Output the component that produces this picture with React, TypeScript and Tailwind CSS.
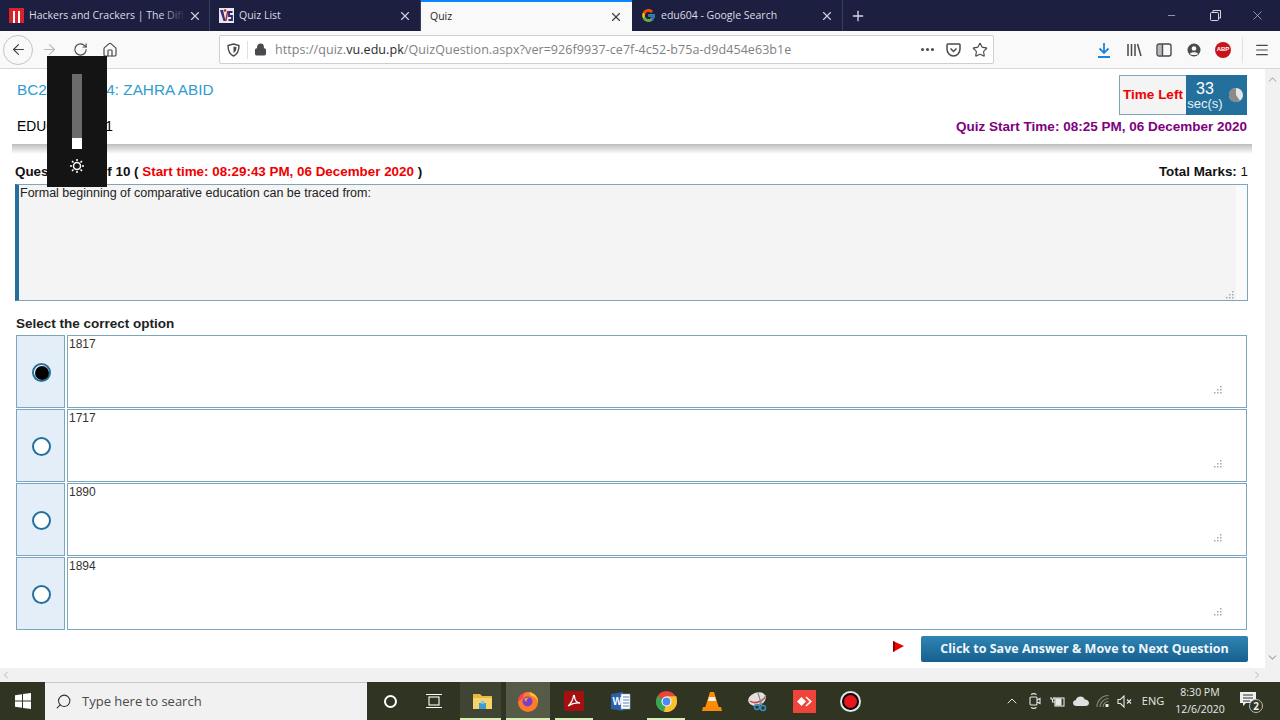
import React from 'react';
import { ArrowLeft, ArrowRight, RotateCw, Home, Lock, MoreHorizontal, Star, ChevronUp, ChevronDown, ChevronLeft, ChevronRight, X, Plus, Minus, Search, Menu } from 'lucide-react';
import { FcGoogle } from 'react-icons/fc';

// Tab favicons
const HackersIcon = () => (
  <svg width="15" height="15" viewBox="0 0 15 15">
    <rect width="15" height="15" fill="#d8232a" />
    <rect x="4" y="3" width="2" height="12" fill="#fff" />
    <rect x="9" y="3" width="2" height="12" fill="#fff" />
  </svg>
);

const VuIcon = () => (
  <svg width="15" height="15" viewBox="0 0 15 15">
    <rect width="15" height="15" fill="#e8e6ee" />
    <path d="M1 2 L4.5 13 L6.5 13 L4 2 Z" fill="#3a2a7a" />
    <path d="M6 13 L8 3 L9.5 3 L7.5 13 Z" fill="#b3202a" />
    <path d="M13.5 4 L10 4 L10 8 L13 8 L13 12 L9.5 12" fill="none" stroke="#2a2a6a" strokeWidth="1.8" />
    <circle cx="6" cy="2.5" r="1.3" fill="#b3202a" />
  </svg>
);

const Tab = ({ title, icon, active, fade, width }: { title: string; icon?: React.ReactNode; active?: boolean; fade?: boolean; width: string }) => (
  <div
    className={
      active
        ? `${width} h-[31px] flex items-center bg-[#f9f9fa] border-t-2 border-[#0a84ff] pl-[9px] text-[#26262b]`
        : `${width} h-[31px] flex items-center border-r border-[#3a3d5c] pl-[9px] text-[#dcdce4]`
    }
  >
    {icon && <span className="w-[20px] shrink-0 flex items-center">{icon}</span>}
    <span className="relative w-[156px] pt-px overflow-hidden whitespace-nowrap text-[10.500px] font-['Open_Sans',sans-serif]">
      {title}
      {fade && <span className="absolute right-0 top-0 h-full w-[24px] bg-gradient-to-r from-transparent to-[#1c1f40]" />}
    </span>
    <span className={icon ? 'ml-[3px]' : 'ml-[23px]'}>
      <X size={14} strokeWidth={2} className={active ? 'text-[#3c3c44]' : 'text-[#d0d0da]'} />
    </span>
  </div>
);

const TabBar = () => (
  <div className="h-[31px] flex items-start bg-[#1c1f40] shrink-0">
    <Tab width="w-[210px]" title="Hackers and Crackers | The Diff" icon={<HackersIcon />} fade />
    <Tab width="w-[211px]" title="Quiz List" icon={<VuIcon />} />
    <Tab width="w-[211px]" title="Quiz" active />
    <Tab width="w-[211px]" title="edu604 - Google Search" icon={<FcGoogle size={15} />} />
    <div className="w-[30px] h-[31px] flex items-center justify-center">
      <Plus size={16} strokeWidth={2} className="text-[#d8d8e2]" />
    </div>
    <div className="flex-1" />
    <div className="w-[46px] h-[31px] flex items-center justify-center">
      <Minus size={11} strokeWidth={1.5} className="text-[#c8c8d4]" />
    </div>
    <div className="w-[41px] h-[31px] flex items-center justify-center pl-[2px]">
      <svg width="11" height="11" viewBox="0 0 11 11" fill="none" stroke="#d8d8e2">
        <rect x="0.5" y="2.5" width="8" height="8" rx="1" />
        <path d="M3 2.5 V0.5 H10.5 V8 H8.5" />
      </svg>
    </div>
    <div className="w-[45px] h-[31px] flex items-center justify-center">
      <X size={15} strokeWidth={1} className="text-[#d8d8e2]" />
    </div>
  </div>
);

const Shield = () => (
  <svg width="13" height="14" viewBox="0 0 13 14" fill="none" stroke="#4a4a4f" strokeWidth="1.4">
    <path d="M6.5 1 L12 2.5 C12 8 10 11.500 6.500 13 C3 11.500 1 8 1 2.500 Z" />
    <path d="M6.500 3.500 L9.500 4.300 C9.500 7 8.500 9 6.500 10 Z" fill="#4a4a4f" stroke="none" />
  </svg>
);

const Pocket = () => (
  <svg width="15" height="14" viewBox="0 0 15 14" fill="none" stroke="#4a4a4f" strokeWidth="1.5">
    <path d="M1 2 C1 1.300 1.500 1 2 1 H13 C13.500 1 14 1.300 14 2 V6 C14 10 11 13 7.500 13 C4 13 1 10 1 6 Z" />
    <path d="M4.500 5.500 L7.500 8.500 L10.500 5.500" />
  </svg>
);

const Library = () => (
  <svg width="15" height="14" viewBox="0 0 15 14" fill="none" stroke="#4a4a4f" strokeWidth="1.5">
    <path d="M1 1 V13 M4.500 1 V13 M8 1 V13 M10.500 1 L14 13" />
  </svg>
);

const Sidebar = () => (
  <svg width="16" height="14" viewBox="0 0 16 14" fill="none" stroke="#4a4a4f" strokeWidth="1.4">
    <rect x="1" y="1" width="14" height="12" rx="2" />
    <rect x="2" y="2" width="4" height="10" fill="#b8b8bc" stroke="none" />
    <path d="M6.500 1 V13" />
  </svg>
);

const Account = () => (
  <svg width="14" height="14" viewBox="0 0 14 14">
    <circle cx="7" cy="7" r="6.500" fill="#4a4a4f" />
    <circle cx="7" cy="5.500" r="2.300" fill="#f9f9fa" />
    <path d="M2.800 11 C3.500 8.800 10.500 8.800 11.200 11 C10 12.300 4 12.300 2.800 11 Z" fill="#f9f9fa" />
  </svg>
);

const NavBar = () => (
  <div className="h-[38px] flex items-center bg-[#f9f9fa] border-b border-[#d8d8da] shrink-0">
    <div className="ml-[3px] w-[30px] h-[30px] rounded-full border border-[#c4c4c6] flex items-center justify-center">
      <ArrowLeft size={17} strokeWidth={1.6} className="text-[#3f3f44]" />
    </div>
    <div className="w-[32px] flex justify-center">
      <ArrowRight size={17} strokeWidth={1.5} className="text-[#b8b8bb]" />
    </div>
    <div className="w-[30px] flex justify-center">
      <RotateCw size={15} strokeWidth={1.8} className="text-[#4a4a4f]" />
    </div>
    <div className="w-[30px] flex justify-center">
      <Home size={16} strokeWidth={1.8} className="text-[#4a4a4f]" />
    </div>
    <div className="ml-[94px] w-[775px] h-[29px] flex items-center bg-white border border-[#cfcfd2] rounded-[2px]">
      <div className="w-[21px] flex justify-end pr-[1px]"><Shield /></div>
      <div className="w-px h-[18px] bg-[#e0e0e2] ml-[6px]" />
      <Lock size={13} strokeWidth={2.4} fill="#4a4a4f" className="text-[#4a4a4f] ml-[6px]" />
      <span className="ml-[8px] pt-[2px] whitespace-nowrap text-[12.500px] text-[#808084] font-['Open_Sans',sans-serif] tracking-[0.07px]">
        https://quiz.<span className="text-[#2a2a2e]">vu.edu.pk</span>/QuizQuestion.aspx?ver=926f9937-ce7f-4c52-b75a-d9d454e63b1e
      </span>
      <div className="flex-1" />
      <MoreHorizontal size={17} strokeWidth={2.4} className="text-[#4a4a4f]" />
      <div className="ml-[10px]"><Pocket /></div>
      <Star size={16} strokeWidth={1.7} className="text-[#4a4a4f] ml-[11px] mr-[5px]" />
    </div>
    <div className="ml-[99px] w-[22px] flex justify-center">
      <svg width="14" height="16" viewBox="0 0 14 16" fill="none" stroke="#1f84d8" strokeWidth="1.800">
        <path d="M7 1 V11 M2.500 6.500 L7 11 L11.500 6.500" />
        <path d="M1 15 H13" strokeWidth="2" />
      </svg>
    </div>
    <div className="ml-[8px] w-[22px] flex justify-center"><Library /></div>
    <div className="ml-[8px] w-[22px] flex justify-center"><Sidebar /></div>
    <div className="ml-[8px] w-[22px] flex justify-center"><Account /></div>
    <div className="ml-[7px] w-[22px] flex justify-center">
      <div className="w-[16px] h-[16px] rounded-full bg-[#c8141c] flex items-center justify-center text-white text-[6px] font-bold font-['Liberation_Sans',sans-serif]">ABP</div>
    </div>
    <div className="ml-[8px] w-px h-[26px] bg-[#e2e2e4]" />
    <div className="ml-[11px]">
      <Menu size={16} strokeWidth={1.8} className="text-[#4a4a4f]" />
    </div>
  </div>
);

const ResizeGrip = () => (
  <svg width="9" height="9" viewBox="0 0 9 9" fill="#a8a8a8">
    <rect x="7" y="1" width="1.500" height="1.500" />
    <rect x="4" y="4" width="1.500" height="1.500" />
    <rect x="7" y="4" width="1.500" height="1.500" />
    <rect x="1" y="7" width="1.500" height="1.500" />
    <rect x="4" y="7" width="1.500" height="1.500" />
    <rect x="7" y="7" width="1.500" height="1.500" />
  </svg>
);

const Option = ({ text, checked }: { text: string; checked?: boolean }) => (
  <div className="flex h-[73px] gap-[2px]">
    <div className="w-[49px] bg-[#e4eef9] border border-[#7ba6bd] flex items-center justify-center pl-[2px] pt-[2px]">
      <div className="w-[19px] h-[19px] rounded-full border-[2.500px] border-[#24709c] bg-white flex items-center justify-center">
        {checked && <div className="w-[14px] h-[14px] rounded-full bg-black" />}
      </div>
    </div>
    <div className="flex-1 flex bg-white border border-[#7ba6bd] pl-[1px] pr-[24px] pb-[13px] text-[12px] leading-[14px] text-[#333]">
      <span className="flex-1 pt-[1px]">{text}</span>
      <span className="self-end"><ResizeGrip /></span>
    </div>
  </div>
);

const QuizPage = () => (
  <div className="flex-1 bg-white pl-[16px] pr-[18px] flex flex-col font-['Liberation_Sans',sans-serif]">
    <div className="h-[46px] pt-[6px] flex justify-between">
      <div className="text-[15.300px] leading-[17px] pt-[6px] pl-px text-[#2e9ccf]">BC200204204: ZAHRA ABID</div>
      <div className="flex h-[40px] w-[128px]">
        <div className="w-[67px] bg-[#f4f4f4] border border-[#7ba6bd] border-r-0 flex items-center justify-center text-[13.500px] font-bold text-[#f00000] whitespace-nowrap">
          Time Left
        </div>
        <div className="flex-1 bg-[#24709c] flex items-center text-white">
          <div className="w-[38px] flex flex-col items-center">
            <span className="text-[16px] leading-[17px]">33</span>
            <span className="text-[13px] leading-[13px] text-[#e8eff4]">sec(s)</span>
          </div>
          <svg width="14" height="14" viewBox="0 0 14 14" className="ml-[5px]">
            <circle cx="7" cy="7" r="7" fill="#e6e6e6" />
            <path d="M7 7 L7 0 A7 7 0 1 0 11 12.700 Z" fill="#8a8a8a" />
          </svg>
        </div>
      </div>
    </div>
    <div className="h-[18px] mt-[3px] flex justify-between items-center">
      <div className="text-[13.800px] pl-px text-black">EDU604 Quiz 1</div>
      <div className="text-[13.500px] font-bold text-[#800080]">Quiz Start Time: 08:25 PM, 06 December 2020</div>
    </div>
    <div className="h-[10px] mt-[8px] -ml-[4px] -mr-[5px] bg-gradient-to-b from-[#bdbdbd] to-white" />
    <div className="h-[16px] mt-[10px] -mr-px flex justify-between items-center text-[13.400px] font-bold">
      <div className="text-[#111] -ml-px">
        Question # 4 of 10 ( <span className="text-[#f00000]">Start time: 08:29:43 PM, 06 December 2020</span> )
      </div>
      <div className="text-[#111]">Total Marks: <span className="font-normal">1</span></div>
    </div>
    <div className="h-[117px] mt-[4px] -mx-px flex bg-[#f4f4f4] border border-[#7ba6bd] border-l-[4px] border-l-[#24709c] text-[12.500px] leading-[14px] text-[#222]">
      <span className="flex-1 pl-px pt-[1px]">Formal beginning of comparative education can be traced from:</span>
      <div className="w-[11px] bg-[#fafafa] flex items-end -ml-[16px] relative">
        <span className="absolute right-[13px] bottom-[1px]"><ResizeGrip /></span>
      </div>
    </div>
    <div className="h-[16px] mt-[15px] text-[13.500px] leading-[16px] font-bold text-[#222]">Select the correct option</div>
    <div className="mt-[3px] flex flex-col gap-px">
      <Option text="1817" checked />
      <Option text="1717" />
      <Option text="1890" />
      <Option text="1894" />
    </div>
    <div className="mt-[6px] flex justify-end items-start">
      <svg width="13" height="13" viewBox="0 0 13 13" className="mt-[4px] mr-[16px]">
        <path d="M1 1 L12 6 L1 12 Z" fill="#ee0000" />
        <path d="M1 1 L3 2 V11 L1 12 Z" fill="#8a0000" />
      </svg>
      <div className="w-[327px] h-[26px] -mr-px rounded-[2px] bg-gradient-to-b from-[#2f85b4] to-[#175f8c] flex items-center justify-center text-[#eef6fb] text-[12.500px] font-bold font-['Open_Sans',sans-serif]">
        Click to Save Answer &amp; Move to Next Question
      </div>
    </div>
  </div>
);

const Page = () => (
  <div className="relative flex-1 flex flex-col min-h-0">
    <div className="flex-1 flex min-h-0">
      <QuizPage />
      <div className="w-[15px] bg-[#f1f1f1] flex flex-col justify-between items-center py-[4px]">
        <ChevronUp size={13} className="text-[#b8b8b8]" />
        <ChevronDown size={13} className="text-[#a8a8a8]" />
      </div>
    </div>
    <div className="h-[14px] bg-[#f1f1f1] flex items-center justify-between pr-[17px]">
      <ChevronLeft size={12} className="text-[#b8b8b8]" />
      <ChevronRight size={12} className="text-[#b8b8b8]" />
    </div>
    {/* Windows brightness flyout */}
    <div className="absolute left-[47px] top-[-13px] w-[60px] h-[131px] bg-[#141414] flex flex-col items-center pt-[18px]">
      <div className="w-[10px] h-[75px] flex flex-col justify-end bg-[#6b6b6b]">
        <div className="h-[11px] bg-white" />
      </div>
      <svg width="14" height="14" viewBox="0 0 14 14" className="mt-[10px]" fill="none" stroke="#fff" strokeWidth="1.500">
        <circle cx="7" cy="7" r="3.500" />
        <path d="M7 0 V2 M7 12 V14 M0 7 H2 M12 7 H14 M2 2 L3.500 3.500 M10.500 10.500 L12 12 M12 2 L10.500 3.500 M3.500 10.500 L2 12" />
      </svg>
    </div>
  </div>
);

// Taskbar app icons
const Explorer = () => (
  <svg width="21" height="18" viewBox="0 0 21 18">
    <path d="M1 2 H8 L10 4 H20 V17 H1 Z" fill="#e8b93f" />
    <rect x="1" y="6" width="19" height="11" fill="#f6d469" />
    <rect x="7" y="11" width="7" height="6" fill="#3f9bd6" />
    <rect x="9" y="9" width="3" height="3" fill="#7cc3ec" />
  </svg>
);

const Firefox = () => (
  <svg width="22" height="22" viewBox="0 0 22 22">
    <circle cx="11" cy="12" r="10" fill="#ff7a2a" />
    <path d="M12 2 C18 3 22 8 21 13 C20 7 16 6 14 6 Z" fill="#ffc22e" />
    <path d="M1 12 C1 6 5 3 8 3 C6 5 6 7 6 8 Z" fill="#f7434f" />
    <circle cx="10.500" cy="11.500" r="5" fill="#7b3fc8" />
    <path d="M7 10 C8 7 11 7 13 8 C10 8 9 10 10 12 Z" fill="#ff9a3a" />
  </svg>
);

const Acrobat = () => (
  <div className="w-[20px] h-[20px] rounded-[2px] bg-[#a50f0f] flex items-center justify-center">
    <svg width="14" height="14" viewBox="0 0 14 14" fill="none" stroke="#fff" strokeWidth="1.300">
      <path d="M1 12 C3 11 6 6 6.500 2 C6.500 1 7.500 1 7.500 2.500 C7.500 6 10 9 13 9 C10 8.500 5 9.500 1 12 Z" />
    </svg>
  </div>
);

const Word = () => (
  <svg width="21" height="21" viewBox="0 0 21 21">
    <path d="M1 3 L13 1 V20 L1 18 Z" fill="#2d5ea8" />
    <rect x="11" y="3" width="9" height="15" fill="#fff" stroke="#8aa7cf" strokeWidth="0.600" />
    <path d="M13 6 H19 M13 9 H19 M13 12 H19 M13 15 H19" stroke="#5a82bb" strokeWidth="1" />
    <text x="2.500" y="14" fontSize="10" fontWeight="700" fill="#fff" fontFamily="Liberation Sans, sans-serif">W</text>
  </svg>
);

const Chrome = () => (
  <svg width="21" height="21" viewBox="0 0 21 21">
    <circle cx="10.500" cy="10.500" r="10.500" fill="#e8453c" />
    <path d="M10.500 10.500 L1.400 5.250 A10.500 10.500 0 0 0 8 20.700 Z" fill="#34a853" />
    <path d="M10.500 10.500 L8 20.700 A10.500 10.500 0 0 0 20.900 9 L20.500 5.250 H10.500 Z" fill="#fbc02d" />
    <circle cx="10.500" cy="10.500" r="5" fill="#fff" />
    <circle cx="10.500" cy="10.500" r="3.900" fill="#4a8af4" />
  </svg>
);

const Vlc = () => (
  <svg width="20" height="21" viewBox="0 0 20 21">
    <path d="M8 1 H12 L17 17 H3 Z" fill="#ff8c00" />
    <path d="M7 6 H13 L14 10 H6 Z" fill="#f4f4f4" />
    <path d="M1 16 H19 L20 20 H0 Z" fill="#f58a0f" />
  </svg>
);

const Snip = () => (
  <svg width="22" height="21" viewBox="0 0 22 21">
    <ellipse cx="10" cy="8" rx="9" ry="6.500" fill="#e6dfdf" transform="rotate(-20 10 8)" />
    <path d="M3 10 C7 13 13 11 18 7" stroke="#c9484e" strokeWidth="1.500" fill="none" />
    <path d="M11 2 L15 15 M19 4 L12 14" stroke="#8a8a8a" strokeWidth="1.200" />
    <circle cx="16" cy="17" r="2.500" fill="none" stroke="#3a8fc0" strokeWidth="1.500" />
    <circle cx="10" cy="16" r="2.500" fill="none" stroke="#3a8fc0" strokeWidth="1.500" />
  </svg>
);

const AnyDesk = () => (
  <div className="w-[23px] h-[23px] bg-[#ef443b] flex items-center justify-center">
    <svg width="15" height="11" viewBox="0 0 15 11" fill="#fff">
      <path d="M4.500 1 L9 5.500 L4.500 10 L0 5.500 Z" />
      <path d="M9.500 0.500 L15 5.500 L9.500 10.500 L8.500 9.500 L12.500 5.500 L8.500 1.500 Z" />
    </svg>
  </div>
);

const Recorder = () => (
  <div className="w-[21px] h-[21px] rounded-full border-2 border-[#e4e4e4] bg-black flex items-center justify-center">
    <div className="w-[13px] h-[13px] rounded-full bg-[#e8161c]" />
  </div>
);

const TaskIcon = ({ children, bar, tile }: { children: React.ReactNode; bar?: string; tile?: string }) => (
  <div className="relative w-[46px] h-[38px] flex items-center justify-center">
    {tile && <span className={tile} />}
    <span className="relative flex">{children}</span>
    {bar && <span className={bar} />}
  </div>
);

const Taskbar = () => (
  <div className="h-[38px] flex items-center bg-[#2f3522] shrink-0">
    <div className="w-[45px] flex justify-center">
      <svg width="16" height="16" viewBox="0 0 16 16" fill="#fff">
        <path d="M0 2.300 L7 1.300 V7.500 H0 Z M8 1.100 L16 0 V7.500 H8 Z M0 8.500 H7 V14.700 L0 13.700 Z M8 8.500 H16 V16 L8 14.900 Z" />
      </svg>
    </div>
    <div className="w-[322px] h-[38px] flex items-center bg-[#f1f1f1] border-t border-[#c8c8c8] pl-[10px] text-[13px] text-[#4a4a4a] font-['Open_Sans',sans-serif]">
      <Search size={17} strokeWidth={1.500} className="text-[#333] -scale-x-100" />
      <span className="ml-[10px]">Type here to search</span>
    </div>
    <TaskIcon>
      <div className="w-[13px] h-[13px] rounded-full border-2 border-white" />
    </TaskIcon>
    <div className="relative w-[46px] h-[38px] flex items-center justify-center pr-[4px]">
      <svg width="16" height="14" viewBox="0 0 16 14" fill="none" stroke="#fff" strokeWidth="1.100">
        <rect x="3" y="3" width="10" height="8" />
        <path d="M0 0.500 H16 M0 13.500 H16" />
      </svg>
    </div>
    <TaskIcon
      tile="absolute inset-y-0 left-[1px] right-[4px] bg-[#3f4532]"
      bar="absolute bottom-0 left-[1px] right-[4px] h-[2px] bg-[#d6efb6]"
    >
      <Explorer />
    </TaskIcon>
    <TaskIcon
      tile="absolute inset-y-0 left-[1px] right-[1px] bg-[#555b46]"
      bar="absolute bottom-0 left-[1px] right-[1px] h-[2px] bg-[#d6efb6]"
    >
      <Firefox />
    </TaskIcon>
    <TaskIcon bar="absolute bottom-0 left-[4px] right-[4px] h-[2px] bg-[#d6efb6]"><Acrobat /></TaskIcon>
    <TaskIcon><Word /></TaskIcon>
    <TaskIcon bar="absolute bottom-0 left-[4px] right-[4px] h-[2px] bg-[#d6efb6]"><Chrome /></TaskIcon>
    <TaskIcon><Vlc /></TaskIcon>
    <TaskIcon><Snip /></TaskIcon>
    <TaskIcon><AnyDesk /></TaskIcon>
    <TaskIcon><Recorder /></TaskIcon>
    <div className="flex-1" />
    <div className="w-[22px] flex justify-center"><ChevronUp size={16} strokeWidth={1.500} className="text-[#e8e8e8]" /></div>
    <div className="w-[23px] flex justify-center">
      <svg width="12" height="16" viewBox="0 0 12 16" fill="none" stroke="#e8e8e8" strokeWidth="1.100">
        <rect x="1" y="4" width="7" height="8" rx="1" />
        <path d="M8 7 L11 5.500 V10.500 L8 9" />
        <path d="M2 1.500 C3.500 0.500 6 0.500 7.500 1.500 M2 14.500 C3.500 15.500 6 15.500 7.500 14.500" />
      </svg>
    </div>
    <div className="w-[23px] flex justify-center">
      <svg width="15" height="11" viewBox="0 0 15 11" fill="none" stroke="#e8e8e8" strokeWidth="1.100">
        <rect x="5" y="2" width="9" height="8" />
        <rect x="6" y="3" width="5" height="6" fill="#e8e8e8" />
        <path d="M1 1 V3 H4 V1 M2.500 3 V6 H5" />
      </svg>
    </div>
    <div className="w-[23px] flex justify-center">
      <svg width="16" height="10" viewBox="0 0 16 10" fill="#e0e0e0">
        <path d="M3.500 10 C1.500 10 0 8.700 0 7 C0 5.500 1.200 4.300 2.700 4.200 C3.200 2 5.200 0.500 7.500 0.500 C9.500 0.500 11.200 1.700 11.800 3.400 C14.200 3.400 16 5 16 7 C16 8.800 14.500 10 12.500 10 Z" />
      </svg>
    </div>
    <div className="w-[22px] flex justify-center">
      <svg width="14" height="14" viewBox="0 0 14 14" fill="none" stroke="#8b8f80" strokeWidth="1.100">
        <path d="M1 13 C1 6.500 6 1.500 12.500 1.500 M4 13 C4 8.500 8 4.500 12.500 4.500 M7 13 C7 10 9.500 7.500 12.500 7.500" />
        <rect x="9.500" y="10" width="3" height="3" fill="#e8e8e8" stroke="none" />
      </svg>
    </div>
    <div className="w-[20px] flex justify-center">
      <svg width="15" height="13" viewBox="0 0 15 13" fill="none" stroke="#e8e8e8" strokeWidth="1.100">
        <path d="M1 4.500 H3.500 L7 1 V12 L3.500 8.500 H1 Z" />
        <path d="M10 4.500 L14 8.500 M14 4.500 L10 8.500" />
      </svg>
    </div>
    <div className="w-[38px] text-center text-[11px] text-[#e8e8e8] font-['Open_Sans',sans-serif]">ENG</div>
    <div className="w-[56px] text-center text-[10.500px] leading-[17px] text-[#e8e8e8] font-['Open_Sans',sans-serif]">
      <div>8:30 PM</div>
      <div>12/6/2020</div>
    </div>
    <div className="w-[12px]" />
    <div className="relative w-[22px] h-[22px] mr-[18px]">
      <svg width="16" height="15" viewBox="0 0 16 15" fill="#f0f0f0" className="mt-[2px]">
        <path d="M0 0 H16 V11 H6 L3 14 V11 H0 Z" />
        <path d="M3 3 H13 M3 6 H13 M3 9 H10" stroke="#2f3522" strokeWidth="1" />
      </svg>
      <span className="absolute right-[-1px] bottom-[-1px] w-[14px] h-[14px] rounded-full bg-[#2f3522] border border-[#bbb] flex items-center justify-center text-[10px] leading-none font-bold text-[#eee] font-['Open_Sans',sans-serif]">2</span>
    </div>
  </div>
);

const App: React.FC = () => {
  return (
    <div className="w-[1280px] h-[720px] flex flex-col overflow-hidden">
      <TabBar />
      <NavBar />
      <Page />
      <Taskbar />
    </div>
  );
};

export default App;
